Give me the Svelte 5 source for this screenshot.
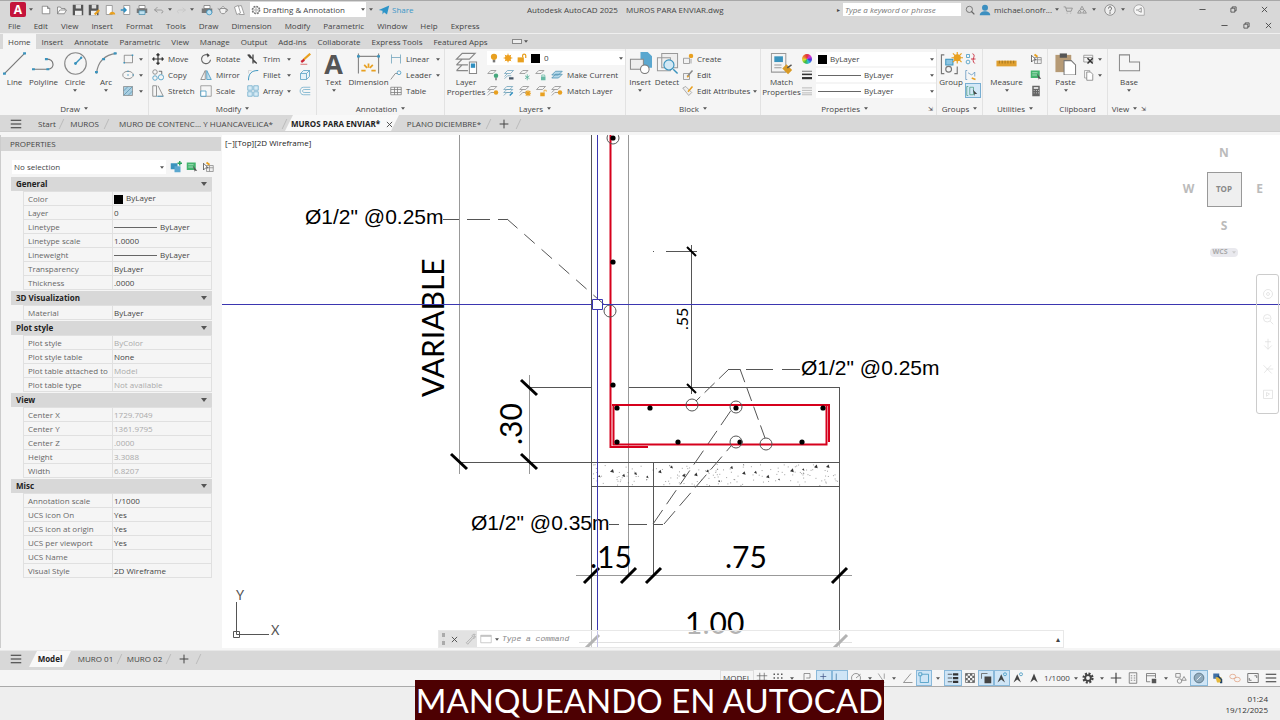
<script lang="ts">
  // 16x16 glyphs, keyed by command
  const icons: Record<string, string> = {
    file: '<path d="M3 3h7l3 3v7H3zM10 3v3h3" fill="#fff" stroke="#777"/>',
    open: '<path d="M2 13V4h4l1 2h5v2M2 13l3-5h9l-3 5z" fill="#fafafa" stroke="#777"/>',
    save: '<path d="M1 1h14v14H1z" fill="#555"/><path d="M5 1h7v5H5z" fill="#ddd"/><path d="M4 9h9v6H4z" fill="#eee"/>',
    saveas: '<path d="M1 1h13v14H1z" fill="#555"/><path d="M5 1h6v5H5z" fill="#ddd"/><path d="M4 9h8v6H4z" fill="#eee"/><path d="M9 14l6-6" stroke="#e8a020" stroke-width="3"/>',
    web: '<path d="M3 2h8v12H3z" fill="#fff" stroke="#888"/><path d="M7 14c0-5 8-5 8 0z" fill="#e8a020"/>',
    mobile: '<path d="M5 2h8v12H5z" fill="#fff" stroke="#888"/><path d="M1 8h7M5 5l3 3-3 3" stroke="#2f8fc0" stroke-width="2"/>',
    plot: '<path d="M4 2h8v4H4z" fill="#fff" stroke="#777"/><path d="M1 6h14v6H1z" fill="#777"/><path d="M4 9h8v5H4z" fill="#bfe0ef" stroke="#4a8fae"/>',
    undo: '<path d="M6 4L2 8l4 3M2 8h8c4 0 4 4 1 4" stroke="#888"/>',
    redo: '<path d="M10 5l4 3-4 3M14 8H6c-3 0-4 3-1 4" stroke="#c4c4c4"/>',
    preview: '<path d="M4 2h8v4H4z" fill="#fff" stroke="#777"/><path d="M1 6h14v6H1z" fill="#777"/><circle cx="11" cy="11" r="3.500" fill="#bfe0ef" stroke="#2f8fc0"/>',
    teapot: '<path d="M4 6h8c1 4-1 7-4 7s-5-3-4-7zM6 5l2-2 2 2M4 8L1 6M12 7c3-1 3 3 0 3" fill="#f2f2f2" stroke="#777"/>',
    sheets: '<path d="M2 4l5-2 3 10-5 2zM7 3l4-1 4 12H8" fill="#fff" stroke="#888"/>',
    gear: '<circle cx="8" cy="8" r="6" stroke="#777" stroke-width="2" stroke-dasharray="2.700 2"/><circle cx="8" cy="8" r="5" stroke="#777"/><circle cx="8" cy="8" r="2" stroke="#777"/>',
    gearDark: '<circle cx="8" cy="8" r="6" stroke="#444" stroke-width="3" stroke-dasharray="2.700 2"/><circle cx="8" cy="8" r="3.800" stroke="#444" stroke-width="2.500"/>',
    share: '<path d="M1 8l14-6-3 12-4-3-2 3V9z" fill="#2d94c8"/>',
    search: '<circle cx="7" cy="7" r="5" stroke="#666" stroke-width="1.300"/><path d="M10 10l5 5" stroke="#666" stroke-width="2"/>',
    user: '<circle cx="8" cy="5" r="4" fill="#3c8fc0"/><path d="M1 15c0-7 14-7 14 0z" fill="#3c8fc0"/>',
    cart: '<path d="M1 3h3l2 7h7l2-5H5M6 13h1M12 13h1" stroke="#777"/>',
    apps: '<path d="M8 2l3 5H5zM4 8l3 5H1zM12 8l3 5H9z" stroke="#777"/>',
    help: '<circle cx="8" cy="8" r="7" fill="#eee" stroke="#777"/><path d="M6 6c0-3 4-3 4 0 0 2-2 1-2 4M8 11v2" stroke="#555" stroke-width="1.300"/>',
    feedback: '<path d="M1 8a7 7 0 1 1 14 0v7H8a7 7 0 0 1-7-7z" fill="#f5f5f5" stroke="#999"/><path d="M4 8h3l4-3v6L7 9" stroke="#777"/>',
    min: '<path d="M1 8h14" stroke="#333" stroke-width="1.800"/>',
    restore: '<path d="M2 5h9v9H2zM5 5V2h9v9h-3" stroke="#333" stroke-width="1.600"/>',
    close: '<path d="M2 2l12 12M14 2L2 14" stroke="#444" stroke-width="2"/>',
    menu: '<path d="M1 3h14M1 8h14M1 13h14" stroke="#333" stroke-width="1.500"/>',
    plus: '<path d="M8 1v14M1 8h14" stroke="#444" stroke-width="1.600"/>',
    line: '<path d="M1 15L15 1" stroke="#777" stroke-width=".8"/><path d="M0 15h2M14 1h2" stroke="#3a93bd" stroke-width="1.500"/>',
    polyline: '<path d="M1 12h10c5 0 5-7-1-7" stroke="#777" stroke-width=".8"/><path d="M0 12h2M10 12h2M9 5h2" stroke="#3a93bd" stroke-width="1.500"/>',
    circle: '<circle cx="8" cy="8" r="7.500" stroke="#888" stroke-width=".8"/><path d="M8 8l4-4" stroke="#3a93bd"/><circle cx="8" cy="8" r="1" fill="#3a93bd"/><circle cx="12" cy="4" r=".8" fill="#3a93bd"/>',
    arc: '<path d="M1 15C2 7 6 2 15 1" stroke="#888" stroke-width=".8"/><path d="M0 14h2M5 5h2M13 1h2" stroke="#3a93bd" stroke-width="1.500"/>',
    rect: '<path d="M3 3h11v10H3z" stroke="#777"/><path d="M2 13h2M13 3h2" stroke="#3a93bd" stroke-width="2"/>',
    ellipse: '<ellipse cx="8" cy="8" rx="7" ry="5" stroke="#777"/><path d="M7 8h2M7 3h2M14 8h2" stroke="#3a93bd" stroke-width="1.500"/>',
    hatch: '<path d="M2 2h12v12H2z" fill="#a9cfe2" stroke="#888"/><path d="M2 8l6-6M2 14L14 2M8 14l6-6" stroke="#5d93ad"/>',
    move: '<path d="M8 1v14M1 8h14M6 3l2-2 2 2M6 13l2 2 2-2M3 6L1 8l2 2M13 6l2 2-2 2" stroke="#333" stroke-width="1.600"/>',
    copy: '<circle cx="4" cy="4" r="3" stroke="#777"/><circle cx="4" cy="12" r="3" stroke="#3a93bd"/><circle cx="12" cy="11" r="3.500" stroke="#3a93bd"/><path d="M9 3h4v4" stroke="#444"/>',
    stretch: '<path d="M1 1h5v14H1zM8 1l7 14H8" stroke="#777"/><path d="M6 15h9" stroke="#3a93bd"/>',
    rotate: '<path d="M11 3A6 6 0 1 0 14 9" stroke="#666" stroke-width="1.500"/><path d="M9 0l4 3-3 3z" fill="#444"/>',
    mirror: '<path d="M7 2v12H1z" stroke="#777"/><path d="M9 2v12h6z" fill="#c5e1ef" stroke="#3a93bd"/>',
    scale: '<path d="M1 1h14v14H1z" stroke="#888"/><path d="M1 8h7v7H1z" fill="#fff" stroke="#3a93bd"/>',
    trim: '<path d="M3 2l8 11M8 2v12M1 2l4 5M8 9l5 5" stroke="#444" stroke-width="1.700"/>',
    fillet: '<path d="M2 15C2 6 6 2 15 2" stroke="#3a93bd" stroke-width="1.300"/><path d="M2 6V2h4" stroke="#ccc"/>',
    array: '<path d="M1 1h6v6H1zM9 1h6v6H9zM1 9h6v6H1zM9 9h6v6H9z" fill="#d6ebf5" stroke="#6aa9c8"/>',
    erase: '<path d="M6 9l9-8" stroke="#e8a020" stroke-width="3"/><path d="M3 12l4-3" stroke="#c23" stroke-width="3"/><path d="M2 15h9" stroke="#c44"/>',
    explode: '<path d="M2 6h8v8H2zM2 6l4-4h8l-4 4M14 2v8l-4 4" fill="#e5f2f9" stroke="#4d9bc0"/>',
    offset: '<path d="M15 3H6C0 3 0 13 6 13h9M15 6H7C4 6 4 10 7 10h8" stroke="#6aa9c8"/>',
    dimension: '<path d="M1 1v14M15 1v14M1 3h14" stroke="#888" stroke-width=".8"/><path d="M3 13l3 0M13 13l-3 0M8 8v3M5 9l2 2M11 9l-2 2" stroke="#e8a020" stroke-width="1.200"/><path d="M0 3h2M14 3h2" stroke="#3a93bd" stroke-width="1.500"/>',
    linear: '<path d="M2 2v12M14 2v12M2 6h12" stroke="#6a9fb8"/>',
    leader: '<path d="M1 14L7 6h3" stroke="#777"/><circle cx="12" cy="5" r="2.500" stroke="#3a93bd"/>',
    table: '<path d="M1 3h14v10H1zM1 6h14M1 10h14M6 3v10M10 3v10" stroke="#777"/>',
    layerProps: '<path d="M1 5l4-4h9l-4 4zM1 9l4-4h5M1 13l4-4h4M1 9h8M1 13h8" stroke="#888" stroke-width=".8"/><path d="M10 7h5v8h-5z" fill="#fff" stroke="#888" stroke-width=".7"/><path d="M11 8h3v3h-3z" fill="#2f8fc0"/>',
    bulb: '<circle cx="8" cy="6" r="5" fill="#e8a020"/><path d="M6 11h4v4H6z" fill="#777"/>',
    sun: '<circle cx="8" cy="8" r="5" fill="#eea020"/><path d="M8 1v14M1 8h14M3 3l10 10M13 3L3 13" stroke="#eea020" stroke-width="1.500"/>',
    lock: '<path d="M1 7h10v8H1z" fill="#e8a020"/><path d="M9 7V4c0-3 5-3 5 0v4" stroke="#e8a020" stroke-width="2"/>',
    layOff: '<path d="M1 6l4-4h7l-4 4z" stroke="#888"/><circle cx="12" cy="9" r="3" fill="#46a77d"/><path d="M12 12v3" stroke="#777" stroke-width="2"/>',
    layIso: '<path d="M2 6l4-4h8l-4 4zM2 10l4-4M2 13l4-4h5" stroke="#6a9fb8"/><path d="M8 11h6v3H8z" fill="#456"/>',
    layFrz: '<path d="M1 6l4-4h7l-4 4z" stroke="#888"/><path d="M11 7v8M8 9l6 4M14 9l-6 4" stroke="#4fae94"/>',
    layLck: '<path d="M1 6l4-4h7l-4 4z" stroke="#888"/><path d="M8 10h6v5H8z" fill="#67b9a4"/><path d="M9 10V8h4v2" stroke="#67b9a4"/>',
    current: '<path d="M1 8l5-5h9l-5 5zM1 12l5-5h9l-5 5z" fill="#b5d8ea" stroke="#4a8fae"/>',
    layOn: '<path d="M1 6l4-4h8l-4 4zM1 10l4-4M1 14l4-4h5" stroke="#888"/><circle cx="12" cy="10" r="3" fill="#e8a020"/>',
    layUniso: '<path d="M1 6l4-4h8l-4 4zM1 10l4-4h8l-4 4zM1 14l4-4h8" stroke="#6a9fb8"/><path d="M9 14l4-4" stroke="#2f8fc0" stroke-width="2"/>',
    layThaw: '<path d="M1 6l4-4h8l-4 4zM1 10l4-4M1 14l4-4h5" stroke="#888"/><path d="M12 7v8M8 11h8M9 8l6 6M15 8l-6 6" stroke="#e8a020" stroke-width="1.500"/>',
    layUnl: '<path d="M2 6l4-4h8l-4 4z" stroke="#888"/><path d="M7 10h6v5H7z" fill="#e8a020"/><path d="M12 10V7h3v2" stroke="#e8a020"/>',
    insert: '<path d="M8 0h5l3 3v8H8z" fill="#5aa7cf"/><path d="M1 5h9v7H1z" fill="#eee" stroke="#888" stroke-width=".7"/><circle cx="11" cy="12" r="3" fill="#fff" stroke="#777" stroke-width=".7"/>',
    detect: '<path d="M4 1h11v10H4z" fill="#eee" stroke="#999" stroke-width=".7"/><path d="M1 4h9v9H1z" stroke="#999" stroke-width=".7"/><circle cx="9" cy="9" r="3.500" fill="#d2e8f4" stroke="#3a93bd" stroke-width=".8"/><path d="M12 12l3 3" stroke="#3a93bd"/>',
    create: '<path d="M2 7h8v7H2zM12 8v6" fill="#f2f2f2" stroke="#888"/><circle cx="12" cy="4" r="3" fill="#e8a020"/>',
    edit: '<path d="M2 6h8v8H2z" fill="#f2f2f2" stroke="#888"/><path d="M7 10l7-8" stroke="#888" stroke-width="2"/><path d="M7 11l2-2" stroke="#e8a020" stroke-width="2"/>',
    attr: '<path d="M1 4l4-2 8 8-4 4z" fill="#eee" stroke="#999"/><path d="M8 9l6-7" stroke="#e8a020" stroke-width="2"/>',
    match: '<path d="M1 1h10v13H1z" fill="#f4f4f4" stroke="#999" stroke-width=".7"/><path d="M3 3h6v4H3z" fill="#3a93bd"/><path d="M3 9h5M3 11h5" stroke="#999" stroke-width=".7"/><path d="M10 10l4 4" stroke="#d99a25" stroke-width="4"/><path d="M12 11l3-2" stroke="#555"/>',
    weights: '<path d="M0 2h16" stroke="#333"/><path d="M0 7h16" stroke="#333" stroke-width="2.500"/><path d="M0 13h16" stroke="#333" stroke-width="3.500"/>',
    types: '<path d="M0 3h16M0 7h16M0 11h16M0 14h16" stroke="#999"/>',
    group: '<path d="M3 2H1v13h2M10 15h2v-5" stroke="#777" stroke-width=".8"/><path d="M4 5h5v4H4z" fill="#8cc5e2" stroke="#3a93bd" stroke-width=".7"/><circle cx="6" cy="12" r="2" stroke="#777" stroke-width=".8"/><circle cx="12" cy="4" r="2.500" fill="#e8a020"/><path d="M12 0v8M8 4h8M9 1l6 6M15 1L9 7" stroke="#e8a020" stroke-width=".8"/>',
    ungroup: '<path d="M2 2h4v4H2z" stroke="#3a93bd"/><circle cx="4" cy="12" r="2.500" stroke="#3a93bd"/><path d="M10 1c6 2-3 8 3 13M8 8h6" stroke="#c34" stroke-width="1.300"/>',
    groupEdit: '<path d="M3 2H1v12h2M4 5l5 3 4-4v6" stroke="#5d93bd"/><path d="M9 12l5 2" stroke="#e8a020" stroke-width="2"/>',
    groupSel: '<path d="M3 2H1v12h2M5 3h5v10H5z" stroke="#4b9b80"/><path d="M9 6l6 6h-3v3z" fill="#444"/>',
    measure: '<path d="M1 6h14v4H1z" fill="#e0a030"/><path d="M3 6v2M5 6v2M7 6v2M9 6v2M11 6v2M13 6v2" stroke="#8a6418" stroke-width=".5"/>',
    quick: '<path d="M6 6h9v8H6z" fill="#eee" stroke="#888"/><path d="M6 9h9M10 6v8" stroke="#888"/><path d="M2 3l6 6H5l-3 3z" fill="#fff" stroke="#444"/><path d="M6 2l4 3" stroke="#e8a020" stroke-width="2.500"/>',
    selAll: '<path d="M1 2h12v10H1z" fill="#42b36d"/><path d="M3 5h7M3 8h7" stroke="#c9efd7"/><path d="M9 6l6 7h-3v2z" fill="#555"/>',
    calc: '<path d="M3 1h10v14H3z" fill="#666"/><path d="M5 3h6v2H5zM5 7h1v1H5zM8 7h1v1H8zM11 7h1v1h-1zM5 10h1v1H5zM8 10h1v1H8zM11 10h1v1h-1z" fill="#fff"/>',
    paste: '<path d="M1 2h11v12H1z" fill="#b69a75"/><path d="M4 1h5v3H4z" fill="#555"/><path d="M7 6h5l3 3v7H7z" fill="#fff" stroke="#777" stroke-width=".7"/>',
    cut: '<path d="M1 3h12v9H1zM1 6h12" stroke="#888"/><path d="M6 7l7 7M13 7l-7 7" stroke="#333" stroke-width="2"/>',
    clip: '<path d="M2 2h7v10H2z" stroke="#999"/><path d="M5 4h5l3 3v8H5z" fill="#fff" stroke="#777"/>',
    base: '<path d="M1 2h7v5h7v6H1z" stroke="#888" stroke-width=".7"/>',
    selPlus: '<path d="M1 3h9v8H1z" fill="#3a93bd"/><path d="M6 7h8v8H6z" fill="#5aa7cf"/><path d="M13 0v6M10 3h6" stroke="#2aa35c" stroke-width="2"/>',
    grid: '<path d="M5 1v14M11 1v14M1 5h14M1 11h14" stroke="#666"/>',
    snap: '<path d="M2 3h2M7 3h2M12 3h2M2 8h2M7 8h2M12 8h2M2 13h2M7 13h2M12 13h2" stroke="#555" stroke-width="2"/>',
    infer: '<path d="M4 14V2h8v6H7" stroke="#777"/>',
    dyn: '<path d="M3 6h8M7 2v8M10 14h4" stroke="#458"/>',
    ortho: '<path d="M3 2v12h11" stroke="#3a73a0"/>',
    polar: '<circle cx="8" cy="8" r="6" stroke="#777"/><path d="M8 8l6-5" stroke="#777"/>',
    iso: '<path d="M3 2l8 12M11 2v7" stroke="#888"/>',
    angle: '<path d="M2 14L12 2M2 14h12" stroke="#777"/>',
    osnap: '<path d="M3 3h11v11H3z" stroke="#3a93bd"/><path d="M1 1h4v4H1z" fill="#d6eaf8" stroke="#3a93bd"/>',
    lwt: '<path d="M1 3h6M1 8h6M1 13h6" stroke="#333"/><path d="M8 3h7M8 8h7M8 13h7" stroke="#333" stroke-width="3"/>',
    transp: '<path d="M2 2h12v12H2z" stroke="#666"/><path d="M2 2h3v3H2zM8 2h3v3H8zM5 5h3v3H5zM11 5h3v3h-3zM2 8h3v3H2zM8 8h3v3H8zM5 11h3v3H5zM11 11h3v3h-3z" fill="#666"/>',
    cycle: '<path d="M6 6h9v9H6z" fill="#444"/><path d="M2 9V2h8" stroke="#555"/>',
    annot: '<path d="M8 2L3 14l5-4 5 4z" fill="#444"/>',
    annotVis: '<path d="M7 3L2 14l5-4 5 4z" fill="#444"/><circle cx="12" cy="3" r="2" stroke="#3a93bd"/>',
    units: '<path d="M3 1h10v14H3zM5 5h2M9 5h2M5 8h2M9 8h2M5 11h2M9 11h2" stroke="#666"/>',
    quickProps: '<path d="M2 2h12v6M2 2v11h5M2 5h12" stroke="#666"/><path d="M9 9h6v6H9z" fill="#555"/>',
    isolate: '<path d="M1 2h6v5H1zM12 6l3 5H9z" stroke="#777"/><circle cx="6" cy="12" r="3" stroke="#777"/>',
    hardware: '<circle cx="8" cy="8" r="6.500" fill="#8fa9bb" stroke="#52697a"/><path d="M5 11l6-6" stroke="#fff"/>',
    python: '<path d="M3 2h8v7H3z" fill="#3f6fa5"/><path d="M6 7h8v7H8z" fill="#e5b93d"/><path d="M9 5l5 5v4h-2" stroke="#246" stroke-width="2"/>',
    links: '<ellipse cx="5" cy="6" rx="4" ry="3" stroke="#e0a080"/><ellipse cx="11" cy="10" rx="4" ry="3" stroke="#e0a080"/>',
    clean: '<path d="M1 2h14v12H1zM10 5h3v3M6 11H3V8" stroke="#777" stroke-width="1.300"/>',
    wrench: '<path d="M3 13l8-8c-1-3 2-4 4-3l-3 3 1 1 2-2c0 3-2 4-3 3l-7 8z" fill="#ddd" stroke="#aaa"/>',
    prompt: '<path d="M1 3h14v10H1z" fill="#fff" stroke="#bbb"/><path d="M1 4h14" stroke="#bbb" stroke-width="2"/>',
    steering: '<circle cx="8" cy="8" r="6" stroke="#ddd"/><circle cx="8" cy="8" r="2" stroke="#ddd"/>',
    pan: '<path d="M8 1v14M3 10l5 5 5-5M4 5h8" stroke="#ddd"/>',
    zoomExt: '<circle cx="7" cy="7" r="5" stroke="#ddd"/><path d="M11 11l4 4M4 7h6" stroke="#ddd"/>',
    orbit: '<path d="M2 3l11 11M12 3L3 13M6 8h9" stroke="#ddd"/>',
    motion: '<path d="M2 3h12v11H2zM6 6l4 2-4 3z" stroke="#ddd"/>'
  };

  const menus = ['File', 'Edit', 'View', 'Insert', 'Format', 'Tools', 'Draw', 'Dimension', 'Modify', 'Parametric', 'Window', 'Help', 'Express'];
  const ribbonTabs = ['Home', 'Insert', 'Annotate', 'Parametric', 'View', 'Manage', 'Output', 'Add-ins', 'Collaborate', 'Express Tools', 'Featured Apps'];
  const quickTools = ['file', 'open', 'save', 'saveas', 'web', 'mobile', 'plot'];

  const sections = [
    { title: 'General', rows: [
      ['Color', 'ByLayer', 'color'], ['Layer', '0'], ['Linetype', 'ByLayer', 'stroke'], ['Linetype scale', '1.0000'],
      ['Lineweight', 'ByLayer', 'stroke'], ['Transparency', 'ByLayer'], ['Thickness', '.0000']
    ] },
    { title: '3D Visualization', rows: [['Material', 'ByLayer']] },
    { title: 'Plot style', rows: [
      ['Plot style', 'ByColor', 'dim'], ['Plot style table', 'None'], ['Plot table attached to', 'Model', 'dim'], ['Plot table type', 'Not available', 'dim']
    ] },
    { title: 'View', rows: [
      ['Center X', '1729.7049', 'dim'], ['Center Y', '1361.9795', 'dim'], ['Center Z', '.0000', 'dim'], ['Height', '3.3088', 'dim'], ['Width', '6.8207', 'dim']
    ] },
    { title: 'Misc', rows: [
      ['Annotation scale', '1/1000'], ['UCS icon On', 'Yes'], ['UCS icon at origin', 'Yes'], ['UCS per viewport', 'Yes'], ['UCS Name', ''], ['Visual Style', '2D Wireframe']
    ] }
  ];

  // [icon, cell kind, active]
  const statusItems: [string, string, boolean?][] = [
    ['grid', 'cell'], ['snap', 'cell'], ['', 'drop'], ['infer', 'wide'], ['dyn', 'cell', true], ['ortho', 'cell', true],
    ['polar', 'cell'], ['', 'drop'], ['iso', 'drop'], ['', 'drop'], ['angle', 'cell'], ['osnap', 'cell', true], ['', 'drop'],
    ['lwt', 'wide', true], ['transp', 'cell'], ['cycle', 'cell', true], ['annotVis', 'cell', true], ['annotVis', 'cell'], ['annot', 'cell']
  ];
  const statusTail: [string, string, boolean?][] = [
    ['gearDark', 'cell'], ['', 'drop'], ['plus', 'cell'], ['units', 'wide'], ['quickProps', 'wide'], ['', 'drop'], ['isolate', 'wide'],
    ['hardware', 'wide', true], ['python', 'wide'], ['links', 'wide'], ['clean', 'wide'], ['menu', 'wide']
  ];

  const rebars = [[613, 138], [613, 262], [613, 385], [617, 408], [650, 408], [736, 408], [823, 408], [617, 442], [678, 442], [740, 442], [802, 442]];
  const callouts = [[613, 138], [610, 311], [692, 405], [736, 407], [736, 442], [766, 444]];

  // seeded stipple for the lean concrete strip
  let seed = 11;
  const rand = () => (seed = (seed * 16807) % 2147483647) / 2147483647;
  const stipple = Array.from({ length: 150 }, () => ({ x: 593 + rand() * 244, y: 464 + rand() * 21 }));
  const stones = Array.from({ length: 20 }, (_, i) => ({ x: 598 + i * 12, y: 466 + rand() * 16, r: 1 + rand() * 2 }));
</script>

{#snippet icon(name: string, size = 'sm')}
  <svg class="icon {size}" viewBox="0 0 16 16" fill="none" aria-hidden="true">{@html icons[name]}</svg>
{/snippet}

{#snippet caret()}
  <svg class="caret" viewBox="0 0 6 4" aria-hidden="true"><path d="M0 0h6L3 4z" /></svg>
{/snippet}

{#snippet tool(name: string, label: string, text = '', drop = false)}
  <button class="tool" aria-label={label}>
    {@render icon(name, 'md')}
    {#if text}<span>{text}</span>{/if}
    {#if drop}{@render caret()}{/if}
  </button>
{/snippet}

{#snippet big(name: string, label: string, drop = false)}
  <button class="big">
    {#if name === 'text'}<b class="letter">A</b>{:else}{@render icon(name, 'lg')}{/if}
    <span>{label}</span>
    {#if drop}{@render caret()}{/if}
  </button>
{/snippet}

{#snippet footer(label: string, drop = true)}
  <button class="panel-title">{label}{#if drop}{@render caret()}{/if}</button>
{/snippet}

{#snippet status(item: [string, string, boolean?])}
  <button class={item[1]} class:on={item[2]} aria-label={item[0] || 'More options'}>
    {#if item[0]}{@render icon(item[0], 'md')}{:else}{@render caret()}{/if}
  </button>
{/snippet}

<div class="app">
  <header class="title-bar">
    <div class="quick">
      <button class="logo" aria-label="Application menu">A</button>
      {@render caret()}
      <div class="quick-tools">
        {#each quickTools as name}
          <button aria-label={name}>{@render icon(name, 'md')}</button>
        {/each}
      </div>
      <div class="history">
        <button aria-label="Undo">{@render icon('undo', 'md')}</button>{@render caret()}
        <button aria-label="Redo">{@render icon('redo', 'md')}</button>{@render caret()}
      </div>
      <div class="quick-tools">
        <button aria-label="Preview">{@render icon('preview', 'md')}</button>
        <button aria-label="Render">{@render icon('teapot', 'md')}</button>
        <button aria-label="Sheet set">{@render icon('sheets', 'md')}</button>
      </div>
      <div class="combo workspace-combo">
        {@render icon('gear')}
        <select aria-label="Workspace"><option>Drafting &amp; Annotation</option></select>
        {@render caret()}
      </div>
      {@render caret()}
      <button class="share">{@render icon('share', 'md')}<span>Share</span></button>
    </div>
    <h1><span>Autodesk AutoCAD 2025</span><span>MUROS PARA ENVIAR.dwg</span></h1>
    <div class="account">
      <span class="arrow">▸</span>
      <input class="search" type="search" aria-label="Search help" placeholder="Type a keyword or phrase" />
      <button aria-label="Search">{@render icon('search')}</button>
      <button class="user">{@render icon('user', 'md')}<span>michael.onofr...</span>{@render caret()}</button>
      <button aria-label="Cart">{@render icon('cart')}</button>
      <button class="pair" aria-label="App store">{@render icon('apps')}{@render caret()}</button>
      <button class="pair" aria-label="Help">{@render icon('help', 'md')}{@render caret()}</button>
      <button aria-label="Feedback">{@render icon('feedback', 'md')}</button>
    </div>
    <div class="window-buttons">
      <button aria-label="Minimize">{@render icon('min', 'xs')}</button>
      <button aria-label="Restore">{@render icon('restore', 'xs')}</button>
      <button aria-label="Close">{@render icon('close', 'xs')}</button>
    </div>
  </header>

  <nav class="menu-bar" aria-label="Menu">
    {#each menus as label}<button>{label}</button>{/each}
    <div class="doc-buttons">
      <button aria-label="Minimize drawing">{@render icon('min', 'xs')}</button>
      <button aria-label="Restore drawing">{@render icon('restore', 'xs')}</button>
      <button aria-label="Close drawing">{@render icon('close', 'xs')}</button>
    </div>
  </nav>

  <nav class="ribbon-tabs" aria-label="Ribbon tabs">
    {#each ribbonTabs as label, i}<button class:active={i === 0}>{label}</button>{/each}
    <button class="collapse" aria-label="Minimize ribbon"><i></i>{@render caret()}</button>
  </nav>

  <div class="ribbon">
    <section class="panel draw">
      <div class="body">
        {@render big('line', 'Line')}
        {@render big('polyline', 'Polyline')}
        {@render big('circle', 'Circle', true)}
        {@render big('arc', 'Arc', true)}
        <div class="stack">
          {@render tool('rect', 'Rectangle', '', true)}
          {@render tool('ellipse', 'Ellipse', '', true)}
          {@render tool('hatch', 'Hatch', '', true)}
        </div>
      </div>
      {@render footer('Draw')}
    </section>
    <section class="panel modify">
      <div class="body">
        <div class="stack">
          {@render tool('move', 'Move', 'Move')}
          {@render tool('copy', 'Copy', 'Copy')}
          {@render tool('stretch', 'Stretch', 'Stretch')}
        </div>
        <div class="stack">
          {@render tool('rotate', 'Rotate', 'Rotate')}
          {@render tool('mirror', 'Mirror', 'Mirror')}
          {@render tool('scale', 'Scale', 'Scale')}
        </div>
        <div class="stack ends">
          {@render tool('trim', 'Trim', 'Trim', true)}
          {@render tool('fillet', 'Fillet', 'Fillet', true)}
          {@render tool('array', 'Array', 'Array', true)}
        </div>
        <div class="stack">
          {@render tool('erase', 'Erase')}
          {@render tool('explode', 'Explode')}
          {@render tool('offset', 'Offset')}
        </div>
      </div>
      {@render footer('Modify')}
    </section>
    <section class="panel annotation">
      <div class="body">
        {@render big('text', 'Text', true)}
        {@render big('dimension', 'Dimension')}
        <div class="stack ends">
          {@render tool('linear', 'Linear', 'Linear', true)}
          {@render tool('leader', 'Leader', 'Leader', true)}
          {@render tool('table', 'Table', 'Table')}
        </div>
      </div>
      {@render footer('Annotation')}
    </section>
    <section class="panel layers">
      <div class="body">
        {@render big('layerProps', 'Layer Properties')}
        <div class="stack">
          <div class="combo layer-combo">
            {@render icon('bulb')}{@render icon('sun')}{@render icon('lock')}<i class="swatch"></i>
            <select aria-label="Layer"><option>0</option></select>
            {@render caret()}
          </div>
          <div class="line">
            {#each ['layOff', 'layIso', 'layFrz', 'layLck'] as name}{@render tool(name, name)}{/each}
            {@render tool('current', 'Make Current', 'Make Current')}
          </div>
          <div class="line">
            {#each ['layOn', 'layUniso', 'layThaw', 'layUnl'] as name}{@render tool(name, name)}{/each}
            {@render tool('layOn', 'Match Layer', 'Match Layer')}
          </div>
        </div>
      </div>
      {@render footer('Layers')}
    </section>
    <section class="panel block">
      <div class="body">
        {@render big('insert', 'Insert', true)}
        {@render big('detect', 'Detect')}
        <div class="stack">
          {@render tool('create', 'Create', 'Create')}
          {@render tool('edit', 'Edit', 'Edit')}
          {@render tool('attr', 'Edit Attributes', 'Edit Attributes', true)}
        </div>
      </div>
      {@render footer('Block')}
    </section>
    <section class="panel properties">
      <div class="body">
        {@render big('match', 'Match Properties')}
        <div class="stack">
          <div class="line"><i class="wheel"></i>
            <div class="combo"><i class="swatch"></i><select aria-label="Object color"><option>ByLayer</option></select>{@render caret()}</div>
          </div>
          <div class="line">{@render icon('weights')}
            <div class="combo"><i class="rule"></i><select aria-label="Lineweight"><option>ByLayer</option></select>{@render caret()}</div>
          </div>
          <div class="line">{@render icon('types')}
            <div class="combo"><i class="rule"></i><select aria-label="Linetype"><option>ByLayer</option></select>{@render caret()}</div>
          </div>
        </div>
      </div>
      <div class="foot">{@render footer('Properties')}<button class="launcher" aria-label="Properties palette">⇲</button></div>
    </section>
    <section class="panel groups">
      <div class="body">
        {@render big('group', 'Group')}
        <div class="stack">
          {@render tool('ungroup', 'Ungroup')}
          {@render tool('groupEdit', 'Group edit')}
          <div class="picked">{@render tool('groupSel', 'Group selection')}</div>
        </div>
      </div>
      {@render footer('Groups')}
    </section>
    <section class="panel utilities">
      <div class="body">
        {@render big('measure', 'Measure', true)}
        <div class="stack">
          {@render tool('quick', 'Quick select')}
          {@render tool('selAll', 'Select all')}
          {@render tool('calc', 'Calculator')}
        </div>
      </div>
      {@render footer('Utilities')}
    </section>
    <section class="panel clipboard">
      <div class="body">
        {@render big('paste', 'Paste', true)}
        <div class="stack">
          {@render tool('cut', 'Cut', '', true)}
          {@render tool('clip', 'Copy clip', '', true)}
        </div>
      </div>
      {@render footer('Clipboard', false)}
    </section>
    <section class="panel view">
      <div class="body">{@render big('base', 'Base', true)}</div>
      <div class="foot">{@render footer('View')}<button class="launcher" aria-label="View settings">⇲</button></div>
    </section>
  </div>

  <nav class="file-tabs" aria-label="Drawings">
    <button class="burger" aria-label="Drawing list">{@render icon('menu', 'md')}</button>
    <button class="tab start">Start</button>
    <button class="tab short">MUROS</button>
    <button class="tab long">MURO DE CONTENC... Y HUANCAVELICA*</button>
    <button class="tab active">MUROS PARA ENVIAR*{@render icon('close', 'xs')}</button>
    <button class="tab plano">PLANO DICIEMBRE*</button>
    <button class="tab add" aria-label="New drawing">{@render icon('plus')}</button>
  </nav>

  <main>
    <aside>
      <h2>PROPERTIES</h2>
      <div class="selection">
        <div class="combo">
          <select aria-label="Selection"><option>No selection</option></select>
          {@render caret()}
        </div>
        {#each ['selPlus', 'selAll', 'quick'] as name}
          <button aria-label={name}>{@render icon(name, 'md')}</button>
        {/each}
      </div>
      {#each sections as section}
        <section class="props">
          <button class="props-head">{section.title}{@render caret()}</button>
          <table>
            <tbody>
              {#each section.rows as [name, value, kind]}
                <tr>
                  <th scope="row">{name}</th>
                  <td class:dim={kind === 'dim'}>
                    {#if kind === 'color'}<i class="swatch"></i>{:else if kind === 'stroke'}<i class="rule"></i>{/if}
                    {value}
                  </td>
                </tr>
              {/each}
            </tbody>
          </table>
        </section>
      {/each}
    </aside>

    <div class="canvas">
      <svg class="drawing" role="img" aria-label="Retaining wall section">
        <g transform="translate(-222 -135)">
          <g class="thin">
            <path class="soft" d="M459.500 135V474M529.500 375V474M628.500 135V575M576 575.500H852M579 642.500H852" />
            <path d="M591.500 135V650M839.500 387V650M653.500 462V575M529 387.500H591M629 387.500H839M459 462.500H839M591 486.500H839" />
            <path d="M691.500 245V394M666 251.500H697M653 251.500H654" />
            <path stroke-dasharray="16 8 23 8 9" d="M443 219.500H507" />
            <path stroke-dasharray="14 9" d="M507 219L607 307" />
            <path stroke-dasharray="18 9 27 6 11" d="M800 369.500H729" />
            <path stroke-dasharray="14 6" d="M729 369L696 401M740 369L765 438" />
            <path stroke-dasharray="10 9 19 6" d="M609 524.500H664" />
            <path stroke-dasharray="17 7" d="M653 524L732 409M664 524L731 446" />
          </g>
          <g class="stones">
            {#each stipple as p}<rect x={p.x} y={p.y} width="1" height="1" opacity=".45" />{/each}
            {#each stones as s}<path d="M{s.x} {s.y}l{s.r} {-s.r} 1 {s.r + 1}z" />{/each}
          </g>
          <path class="steel" d="M610.500 135V447H648" />
          <path class="steel" d="M612 405H829V442M613.500 405V444.500H826.500V405" />
          {#each rebars as [cx, cy]}<circle {cx} {cy} r="2.600" />{/each}
          {#each callouts as [cx, cy]}<circle class="ring" {cx} {cy} r="6" />{/each}
          <path class="tick" d="M451 454l16 15M521 380l16 15M521 454l16 15M584 583l15-15M621 583l15-15M646 583l15-15M832 583l15-15M584 650l15-15M832 650l15-15" />
          <path class="tick small" d="M687 247l9 9M687 384l9 9" />
          <g class="note">
            <text x="305" y="224">Ø1/2" @0.25m</text>
            <text x="801" y="375">Ø1/2" @0.25m</text>
            <text x="471" y="530">Ø1/2" @0.35m</text>
          </g>
          <g class="dims">
            <text x="590" y="568">.15</text>
            <text x="725" y="568">.75</text>
            <text x="685" y="634">1.00</text>
            <text transform="translate(522 445) rotate(-90)">.30</text>
            <text transform="translate(444 397) rotate(-90)">VARIABLE</text>
            <text class="minor" transform="translate(688 330) rotate(-90)">.55</text>
          </g>
          <path class="cursor" d="M222 304.500H592M603 304.500H1600M597.500 135V299M597.500 309V650M592.500 299.500h10v10h-10z" />
          <path class="ucs" d="M236.500 602V634.500H269M233.500 631.500h6v6h-6z" />
          <g class="axes"><text x="271" y="635">X</text><text x="236" y="600">Y</text></g>
        </g>
      </svg>

      <span class="view-label">[−][Top][2D Wireframe]</span>

      <div class="cube">
        <span class="n">N</span><span class="w">W</span><button>TOP</button><span class="e">E</span><span class="s">S</span>
        <button class="wcs">WCS {@render caret()}</button>
      </div>

      <div class="nav-bar">
        {#each ['steering', 'zoomExt', 'pan', 'orbit', 'motion'] as name}
          <button aria-label={name}>{@render icon(name, 'md')}</button>
        {/each}
      </div>

      <div class="command">
        <div class="grip"><span class="dots"></span>{@render icon('close', 'xs')}{@render icon('wrench', 'md')}</div>
        {@render icon('prompt', 'md')}{@render caret()}
        <input aria-label="Command" placeholder="Type a command" />
        <span class="up">▴</span>
      </div>
    </div>
  </main>

  <nav class="layout-tabs" aria-label="Layouts">
    <button class="burger" aria-label="Layout list">{@render icon('menu', 'md')}</button>
    <button class="tab active">Model</button>
    <button class="tab">MURO 01</button>
    <button class="tab">MURO 02</button>
    <button class="tab add" aria-label="New layout">{@render icon('plus')}</button>
  </nav>

  <div class="status-bar">
    <button class="model">MODEL</button>
    {#each statusItems as item}{@render status(item)}{/each}
    <button class="ratio">1/1000{@render caret()}</button>
    {#each statusTail as item}{@render status(item)}{/each}
  </div>

  <footer class="taskbar"><time>01:24</time><time>19/12/2025</time></footer>

  <div class="banner">MANQUEANDO EN AUTOCAD</div>
</div>

<style>
  :global(body) {
    background: #f5f5f5;
    margin: 0;
  }

  .app {
    color: #444;
    display: flex;
    flex-direction: column;
    font-family: 'Open Sans', sans-serif;
    font-size: 8px;
    line-height: 10px;
    min-height: 100vh;
    overflow: hidden;
    position: relative;
  }

  .app :global(*) {
    box-sizing: border-box;
  }

  button,
  select,
  input {
    background: none;
    border: 0;
    color: inherit;
    font: inherit;
    margin: 0;
    padding: 0;
  }

  button {
    align-items: center;
    display: flex;
    justify-content: center;
    white-space: nowrap;
  }

  select {
    appearance: none;
    flex: 1;
    min-width: 0;
  }

  .icon {
    display: block;
    flex: none;
    height: 10px;
    width: 10px;
  }

  .icon.xs {
    height: 7px;
    width: 7px;
  }

  .icon.md {
    height: 12px;
    width: 12px;
  }

  .icon.lg {
    height: 23px;
    width: 23px;
  }

  .caret {
    fill: #555;
    flex: none;
    height: 3px;
    width: 4px;
  }

  .combo {
    align-items: center;
    background: #fff;
    display: flex;
    gap: 3px;
    height: 14px;
    padding: 0 2px;
  }

  .swatch {
    background: #000;
    flex: none;
    height: 9px;
    width: 9px;
  }

  .title-bar {
    align-items: center;
    background: #d8d8d8;
    border-top: 1px solid #a8a8a8;
    display: flex;
    height: 18px;
  }

  .quick,
  .account,
  .quick-tools,
  .history {
    align-items: center;
    display: flex;
  }

  .quick {
    gap: 3px;
    padding-left: 10px;
  }

  .logo {
    background: #c4143c;
    border-radius: 2px;
    color: #fff;
    font-size: 12px;
    font-weight: 700;
    height: 15px;
    width: 16px;
  }

  .quick-tools {
    padding-left: 2px;
  }

  .quick-tools button {
    width: 16px;
  }

  .history {
    gap: 3px;
  }

  .workspace-combo {
    gap: 2px;
    height: 15px;
    padding: 0 1px;
    width: 116px;
  }

  .share {
    color: #3a97c8;
    gap: 2px;
    margin-left: 2px;
  }

  h1 {
    display: flex;
    flex: 1;
    font-size: 8px;
    font-weight: 400;
    gap: 8px;
    justify-content: center;
    margin: 0;
  }

  .account {
    gap: 4px;
  }

  .account .arrow {
    font-size: 6px;
  }

  .search {
    background: #fff;
    height: 13px;
    margin-left: -1px;
    padding-left: 2px;
    width: 118px;
  }

  .search::placeholder {
    color: #777;
    font-style: italic;
    opacity: 1;
  }

  .user {
    gap: 3px;
  }

  .pair {
    gap: 5px;
    margin-right: 4px;
  }

  .window-buttons {
    display: flex;
    padding-left: 42px;
  }

  .window-buttons button {
    width: 31px;
  }

  .menu-bar,
  .ribbon-tabs,
  .file-tabs,
  .layout-tabs {
    background: #d8d8d8;
    display: flex;
  }

  .menu-bar {
    border-bottom: 1px solid #efefef;
    gap: 1px;
    height: 16px;
    padding-left: 2px;
  }

  .menu-bar > button {
    padding: 0 6px;
  }

  .doc-buttons {
    display: flex;
    margin-left: auto;
    padding-right: 1px;
  }

  .doc-buttons button {
    width: 22px;
  }

  .ribbon-tabs {
    gap: 1px;
    height: 15px;
    padding-left: 3px;
  }

  .ribbon-tabs button {
    padding: 0 5px;
  }

  .ribbon-tabs button.active {
    background: #f5f5f5;
  }

  .ribbon-tabs .collapse {
    gap: 2px;
    margin-left: 13px;
  }

  .collapse i {
    background: #eee;
    border: 1px solid #888;
    height: 5px;
    width: 10px;
  }

  .ribbon {
    background: #f5f5f5;
    display: flex;
    height: 66px;
  }

  .panel {
    border-right: 1px solid #e2e2e2;
    display: flex;
    flex: none;
    flex-direction: column;
  }

  .body {
    display: grid;
    flex: 1;
    padding-top: 2px;
  }

  .panel-title {
    align-self: center;
    gap: 4px;
    height: 13px;
  }

  .foot {
    display: flex;
    justify-content: center;
  }

  .launcher {
    font-size: 6px;
    margin-left: 4px;
  }

  .big {
    align-self: start;
    flex-direction: column;
    padding-top: 1px;
    white-space: normal;
  }

  .big span {
    margin-top: 2px;
  }

  .big .caret {
    margin-top: 2px;
  }

  .letter {
    color: #555;
    font-size: 27px;
    font-weight: 700;
    line-height: 23px;
  }

  .stack {
    display: flex;
    flex-direction: column;
  }

  .stack .tool,
  .line {
    height: 16px;
  }

  .tool {
    gap: 4px;
    justify-content: flex-start;
  }

  .line {
    align-items: center;
    display: flex;
    gap: 4px;
  }

  .ends .tool .caret {
    margin-left: auto;
  }

  .draw {
    width: 149px;
  }

  .draw .body {
    grid-template-columns: 29px 29px 34px 28px 1fr;
  }

  .draw .stack {
    padding-left: 2px;
  }

  .draw .tool {
    gap: 5px;
  }

  .modify {
    width: 168px;
  }

  .modify .body {
    grid-template-columns: 48px 47px 44px 1fr;
    padding-left: 3px;
  }

  .modify .stack:last-child {
    padding-left: 8px;
  }

  .annotation {
    width: 128px;
  }

  .annotation .body {
    grid-template-columns: 33px 37px 1fr;
  }

  .annotation .stack {
    padding: 0 5px 0 3px;
  }

  .layers {
    width: 181px;
  }

  .layers .body {
    grid-template-columns: 42px 1fr;
  }

  .layer-combo {
    gap: 4px;
    margin-bottom: 2px;
  }

  .block {
    width: 135px;
  }

  .block .body {
    grid-template-columns: 28px 26px 1fr;
  }

  .block .stack {
    padding-left: 2px;
  }

  .block .tool {
    gap: 3px;
  }

  .properties {
    width: 176px;
  }

  .properties .body {
    grid-template-columns: 41px 1fr;
  }

  .properties .combo {
    flex: 1;
  }

  .properties .foot {
    justify-content: flex-end;
  }

  .properties .launcher {
    margin: 0 3px 0 60px;
  }

  .wheel {
    background: conic-gradient(#d33, #d3c, #43d, #3bd, #3b4, #dd3, #e73, #d33);
    border-radius: 50%;
    height: 10px;
    width: 10px;
  }

  .rule {
    background: #666;
    flex: none;
    height: 1px;
    width: 43px;
  }

  .groups {
    width: 46px;
  }

  .groups .body {
    grid-template-columns: 28px 1fr;
  }

  .picked {
    background: #d3e8f7;
    border: 1px solid #78aed2;
    display: flex;
    height: 15px;
    width: 16px;
  }

  .picked .tool {
    height: 13px;
  }

  .utilities {
    width: 65px;
  }

  .utilities .body {
    grid-template-columns: 47px 1fr;
  }

  .clipboard {
    width: 60px;
  }

  .clipboard .body {
    grid-template-columns: 35px 1fr;
  }

  .clipboard .tool {
    gap: 3px;
  }

  .view {
    border: 0;
    width: 42px;
  }

  .file-tabs {
    border-bottom: 1px solid #cfcfcf;
    height: 17px;
  }

  .file-tabs button {
    padding-top: 2px;
  }

  .burger {
    width: 32px;
  }

  .tab {
    padding: 0 8px;
    position: relative;
  }

  .tab::after {
    background: #bbb;
    content: '';
    height: 10px;
    position: absolute;
    right: 0;
    transform: skewX(-25deg);
    width: 1px;
  }

  .tab.active {
    background: #f8f8f8;
    clip-path: polygon(8px 0, 100% 0, calc(100% - 8px) 100%, 0 100%);
    color: #222;
    font-weight: 700;
    gap: 6px;
  }

  .start {
    width: 30px;
  }

  .short {
    width: 45px;
  }

  .long {
    width: 178px;
  }

  .file-tabs .active {
    width: 114px;
  }

  .plano {
    width: 90px;
  }

  .add {
    width: 30px;
  }

  main {
    border-bottom: 2px solid #f5f5f5;
    border-top: 3px solid #f5f5f5;
    display: flex;
    flex: 1;
  }

  aside {
    background: #f5f5f5;
    border-left: 1px solid #ccc;
    flex: none;
    padding: 2px 1px 60px 0;
    width: 222px;
  }

  h2 {
    background: #d5d5d5;
    font-size: 8px;
    font-weight: 400;
    line-height: 14px;
    margin: 0;
    padding-left: 9px;
  }

  .selection {
    display: flex;
    gap: 4px;
    margin: 9px 6px 3px 11px;
  }

  .selection .combo {
    height: 14px;
    width: 154px;
  }

  .props {
    margin: 0 9px 1px 10px;
  }

  .props-head {
    background: #d8d8d8;
    color: #222;
    font-weight: 700;
    height: 14px;
    justify-content: space-between;
    padding: 0 5px;
    width: 100%;
  }

  .props-head .caret {
    height: 4px;
    width: 6px;
  }

  table {
    border-collapse: collapse;
    margin-left: 12px;
    table-layout: fixed;
    width: 189px;
  }

  tr {
    height: 14px;
  }

  th,
  td {
    border: 1px solid #e0e0e0;
    font-weight: 400;
    padding: 0;
    text-align: left;
    white-space: nowrap;
  }

  th {
    color: #666;
    padding-left: 4px;
    width: 89px;
  }

  td {
    padding-left: 1px;
  }

  td.dim {
    color: #aaa;
  }

  td i {
    display: inline-block;
    margin-right: 1px;
    vertical-align: middle;
  }

  .canvas {
    background: #fff;
    flex: 1;
    min-width: 0;
    position: relative;
  }

  .drawing {
    height: 100%;
    left: 0;
    position: absolute;
    top: 0;
    width: 100%;
  }

  .thin,
  .ring {
    fill: none;
    stroke: #555;
    stroke-width: 1;
  }

  .soft {
    stroke: #999;
  }

  .stones {
    fill: #333;
  }

  .steel {
    fill: none;
    stroke: #d6001c;
    stroke-width: 2;
  }

  .tick {
    stroke: #000;
    stroke-width: 3;
  }

  .tick.small {
    stroke-width: 2;
  }

  .note {
    font-family: 'Liberation Sans', sans-serif;
    font-size: 21px;
  }

  .dims {
    font-family: Lato, sans-serif;
    font-size: 30px;
  }

  .dims .minor {
    font-size: 16px;
  }

  .cursor {
    fill: none;
    stroke: #3b36b0;
  }

  .ucs {
    fill: none;
    stroke: #555;
  }

  .axes {
    fill: #555;
    font-family: Lato, sans-serif;
    font-size: 13px;
  }

  .view-label {
    color: #222;
    left: 3px;
    position: absolute;
    top: 3px;
  }

  .cube {
    align-items: center;
    color: #bbb;
    display: grid;
    font-size: 12px;
    font-weight: 700;
    grid-template-areas: '. n .' 'w top e' '. s .' '. wcs .';
    grid-template-columns: 17px 54px 17px;
    grid-template-rows: 16px 56px 18px 34px;
    justify-items: center;
    position: absolute;
    right: 12px;
    top: 10px;
  }

  .cube button {
    background: #efefef;
    border: 1px solid #999;
    color: #888;
    font-size: 8px;
    grid-area: top;
    height: 35px;
    width: 35px;
  }

  .n {
    grid-area: n;
  }

  .w {
    grid-area: w;
  }

  .e {
    grid-area: e;
  }

  .s {
    grid-area: s;
  }

  .cube .wcs {
    background: #e9e9ee;
    border: 0;
    border-radius: 4px;
    color: #aaa;
    font-size: 7px;
    gap: 4px;
    grid-area: wcs;
    height: 9px;
    width: 28px;
  }

  .wcs .caret {
    fill: #ccc;
  }

  .nav-bar {
    align-items: center;
    border: 1px solid #ccc;
    border-radius: 3px;
    display: flex;
    flex-direction: column;
    height: 140px;
    justify-content: space-evenly;
    position: absolute;
    right: 1px;
    top: 139px;
    width: 23px;
  }

  .command {
    align-items: center;
    background: rgba(255, 255, 255, 0.7);
    border: 1px solid #e8e8e8;
    bottom: 0;
    display: flex;
    gap: 3px;
    height: 18px;
    left: 216px;
    position: absolute;
    right: 216px;
  }

  .grip {
    align-items: center;
    align-self: stretch;
    background: #e2e2e2;
    display: flex;
    gap: 6px;
    padding: 0 3px;
    width: 38px;
  }

  .dots {
    border-left: 3px dotted #aaa;
    height: 12px;
  }

  .command input {
    flex: 1;
    font-family: 'Liberation Mono', monospace;
    font-style: italic;
  }

  .command input::placeholder {
    color: #888;
    opacity: 1;
  }

  .up {
    padding-right: 3px;
  }

  .layout-tabs {
    border-bottom: 3px solid #d8d8d8;
    border-top: 1px solid #e8e8e8;
    height: 20px;
  }

  .layout-tabs .burger {
    width: 32px;
  }

  .layout-tabs .active {
    margin-left: -3px;
    width: 42px;
  }

  .layout-tabs .tab:not(.active) {
    width: 49px;
  }

  .layout-tabs .tab.add {
    width: 30px;
  }

  .status-bar {
    background: #f5f5f5;
    border-bottom: 1px solid #aaa;
    display: flex;
    height: 17px;
    justify-content: flex-end;
  }

  .model {
    border: 1px solid #ddd;
    width: 34px;
  }

  .cell {
    width: 16px;
  }

  .drop {
    width: 12px;
  }

  .wide {
    width: 18px;
  }

  .ratio {
    gap: 4px;
    width: 38px;
  }

  .on {
    background: #cfe5f6;
    border: 1px solid #8ab9da;
  }

  .taskbar {
    align-items: flex-end;
    background: #eee;
    color: #333;
    display: flex;
    flex-direction: column;
    gap: 1px;
    height: 33px;
    padding: 7px 12px 0 0;
  }

  .banner {
    align-items: center;
    background: #4d0002;
    bottom: 0;
    color: #fff;
    display: flex;
    font-family: Lato, sans-serif;
    font-size: 33px;
    height: 40px;
    justify-content: center;
    left: 415px;
    line-height: 40px;
    position: absolute;
    white-space: nowrap;
    width: 469px;
  }
</style>
